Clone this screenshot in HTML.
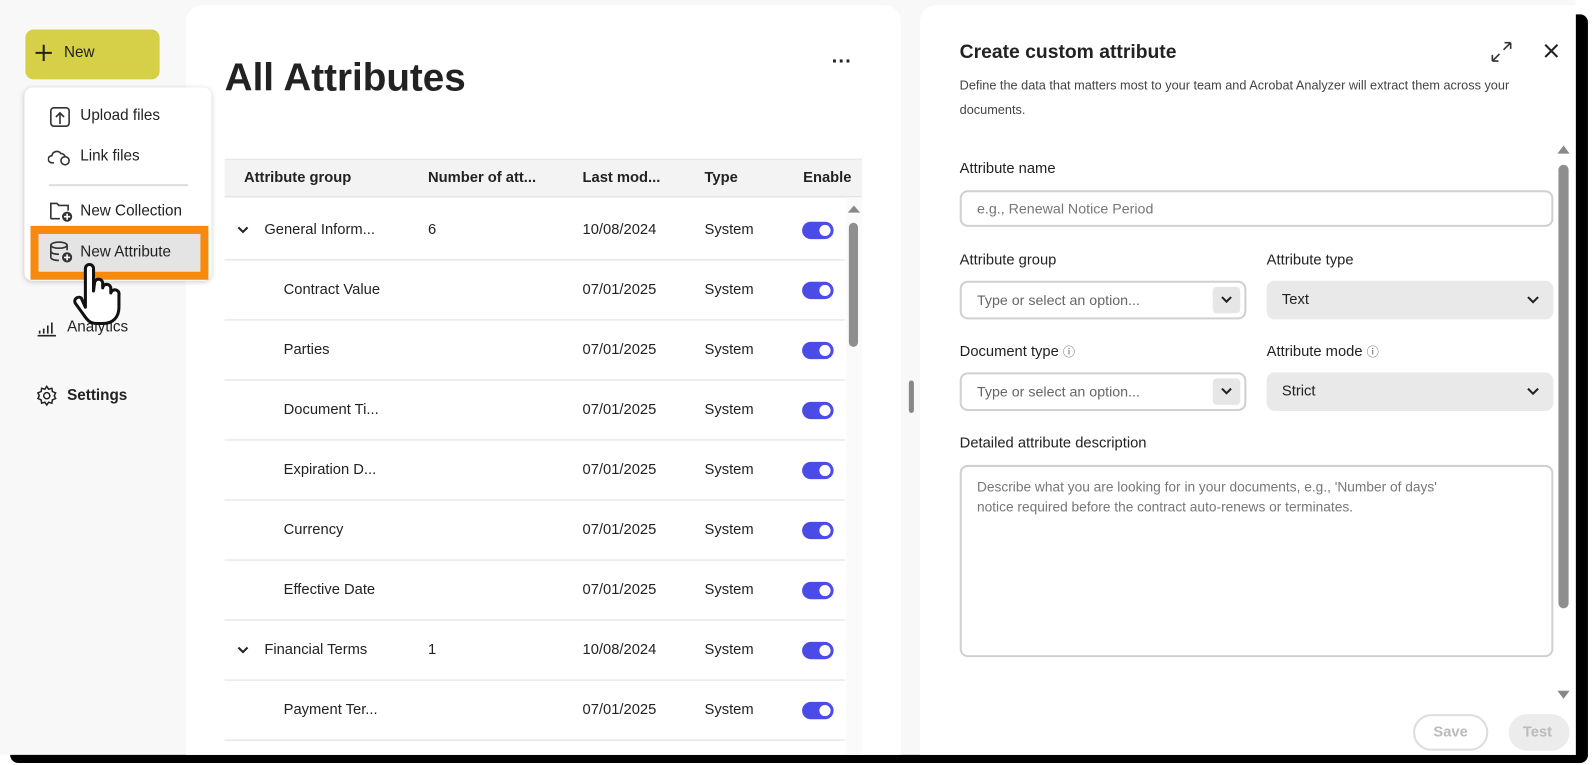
<!DOCTYPE html>
<html><head><meta charset="utf-8"><style>
*{box-sizing:border-box;margin:0;padding:0}
html,body{width:1594px;height:765px;overflow:hidden;background:#fff;font-family:"Liberation Sans",sans-serif;color:#222}
#w{position:absolute;left:0;top:0;width:1568px;height:752px;transform:scale(1.0166,1.0173);transform-origin:0 0}
.a{position:absolute}
.t{position:absolute;white-space:nowrap;font-size:14.5px;line-height:18px}
.b{font-weight:bold}
.tg{position:absolute;width:31px;height:17px;border-radius:9px;background:#4b4be8}
.tg:after{content:"";position:absolute;right:3px;top:3px;width:11px;height:11px;border-radius:50%;background:#fff}
.hr{position:absolute;left:221px;width:610px;height:1px;background:#ddd}
.inp{position:absolute;border:2px solid #d0d0d0;border-radius:8px;background:#fff}
.sel{position:absolute;border-radius:8px;background:#e9e9e9}
.ph{color:#777}
</style></head><body><div id="w">
<div class="a" style="left:0;top:0;width:1550px;height:742px;background:#f8f8f8"></div>
<div class="a" style="left:1550px;top:14px;width:12px;height:736px;background:#000;border-radius:0 8px 8px 0"></div>
<div class="a" style="left:10px;top:742px;width:1552px;height:8px;background:#000;border-radius:0 0 8px 8px"></div>

<!-- new button -->
<div class="a" style="left:25px;top:29px;width:132px;height:49px;background:#d6cf48;border-radius:8px"></div>
<svg class="a" style="left:34px;top:43px" width="18" height="18"><path d="M9 1v16M1 9h16" stroke="#222" stroke-width="2"/></svg>
<div class="t" style="left:63px;top:43px;font-size:15px">New</div>

<div class="t" style="left:66px;top:313px;font-size:15px">Analytics</div>
<svg class="a" style="left:35px;top:312px" width="22" height="20"><g stroke="#222" stroke-width="1.6"><path d="M2 18h18M4 16v-3M8 16v-5M12 16v-8M16 16v-11"/></g></svg>
<svg class="a" style="left:35px;top:378px" width="22" height="22" viewBox="0 0 24 24"><path d="M12 2l2 3 3.5-1 .5 3.5 3.5 1.5-1.5 3 1.5 3-3.5 1.5-.5 3.5-3.5-1-2 3-2-3-3.5 1-.5-3.5L2.5 15 4 12 2.5 9 6 7.5 6.5 4 10 5z" fill="none" stroke="#222" stroke-width="1.6"/><circle cx="12" cy="12" r="3.3" fill="none" stroke="#222" stroke-width="1.6"/></svg>
<div class="t b" style="left:66px;top:380px;font-size:15px">Settings</div>

<!-- main card -->
<div class="a" style="left:183px;top:5px;width:703px;height:737px;background:#fff;border-radius:16px 16px 0 0"></div>
<div class="t b" style="left:221px;top:55px;font-size:38px;line-height:44px">All Attributes</div>
<div class="t b" style="left:818px;top:52px;font-size:20px">···</div>
<div class="a" style="left:221px;top:156px;width:627px;height:38px;background:#f3f3f3;border-top:1px solid #e4e4e4;border-bottom:1px solid #ddd"></div>
<div class="t b" style="left:240px;top:166px">Attribute group</div>
<div class="t b" style="left:421px;top:166px">Number of att...</div>
<div class="t b" style="left:573px;top:166px">Last mod...</div>
<div class="t b" style="left:693px;top:166px">Type</div>
<div class="t b" style="left:790px;top:166px">Enable</div>
<div class="a" style="left:832px;top:195px;width:16px;height:547px;background:#fafafa"></div>
<div class="a" style="left:834px;top:202px;border-left:6px solid transparent;border-right:6px solid transparent;border-bottom:7px solid #888"></div>
<div class="a" style="left:835px;top:219px;width:9px;height:122px;background:#8e8e8e;border-radius:5px"></div>
<div class="a" style="left:894px;top:374px;width:5px;height:32px;background:#888;border-radius:3px"></div>

<div id="rows"></div>

<!-- menu (above card) -->
<div class="a" style="left:24px;top:86px;width:184px;height:190px;background:#fff;border-radius:8px;box-shadow:0 1px 5px rgba(0,0,0,.2)"></div>
<svg class="a" style="left:48px;top:104px" width="22" height="22"><rect x="2" y="2" width="18" height="18" rx="3" fill="none" stroke="#333" stroke-width="1.6"/><path d="M11 18V7M7 11l4-4 4 4" fill="none" stroke="#333" stroke-width="1.6"/></svg>
<div class="t" style="left:79px;top:105px;font-size:15px">Upload files</div>
<svg class="a" style="left:47px;top:144px" width="26" height="20"><path d="M6 16H4a3 3 0 010-7 5 5 0 019-2 4 4 0 014 3" fill="none" stroke="#333" stroke-width="1.6"/><circle cx="17" cy="14" r="4" fill="none" stroke="#333" stroke-width="1.6"/></svg>
<div class="t" style="left:79px;top:145px;font-size:15px">Link files</div>
<div class="a" style="left:48px;top:181px;width:137px;height:2px;background:#ddd"></div>
<svg class="a" style="left:48px;top:197px" width="26" height="22"><path d="M11 18H3a1 1 0 01-1-1V3h6l2 2h9v5" fill="none" stroke="#333" stroke-width="1.6"/><circle cx="18" cy="16" r="5" fill="#333"/><path d="M18 13v6M15 16h6" stroke="#fff" stroke-width="1.6"/></svg>
<div class="t" style="left:79px;top:199px;font-size:15px">New Collection</div>
<div class="a" style="left:30px;top:222px;width:175px;height:53px;border:8px solid #f7890d"></div>
<div class="a" style="left:38px;top:230px;width:159px;height:37px;background:#e4e4e4"></div>
<svg class="a" style="left:48px;top:236px" width="26" height="24"><ellipse cx="10" cy="5" rx="8" ry="3" fill="none" stroke="#333" stroke-width="1.6"/><path d="M2 5v12c0 2 4 3 8 3M18 5v5M2 11c0 2 4 3 8 3" fill="none" stroke="#333" stroke-width="1.6"/><circle cx="18" cy="17" r="5" fill="#333"/><path d="M18 14v6M15 17h6" stroke="#fff" stroke-width="1.6"/></svg>
<div class="t" style="left:79px;top:239px;font-size:15px">New Attribute</div>
<svg class="a" style="left:62px;top:256px" width="60" height="66"><path d="M22 46V8a4 4 0 018 0v22l1-8a4 4 0 018 1v4a4 4 0 018 1v4a4 4 0 018 2v12c0 10-6 16-16 16h-6c-6 0-9-3-13-9l-8-11a4 4 0 016-5z" fill="#fff" stroke="#111" stroke-width="3" stroke-linejoin="round"/></svg>

<!-- right panel -->
<div class="a" style="left:905px;top:5px;width:645px;height:737px;background:#fff;border-radius:16px 0 0 0"></div>
<div class="t b" style="left:944px;top:41px;font-size:19px;line-height:22px">Create custom attribute</div>
<div class="t" style="left:944px;top:75px;font-size:12.5px;color:#444">Define the data that matters most to your team and Acrobat Analyzer will extract them across your</div>
<div class="t" style="left:944px;top:99px;font-size:12.5px;color:#444">documents.</div>
<svg class="a" style="left:1465px;top:39px" width="24" height="24"><path d="M3 21l7-7M3 21v-6M3 21h6M21 3l-7 7M21 3v6M21 3h-6" fill="none" stroke="#333" stroke-width="1.6"/></svg>
<svg class="a" style="left:1518px;top:42px" width="16" height="16"><path d="M2 2l12 12M14 2L2 14" stroke="#222" stroke-width="2"/></svg>
<div class="a" style="left:1532px;top:143px;border-left:6px solid transparent;border-right:6px solid transparent;border-bottom:8px solid #888"></div>
<div class="a" style="left:1533px;top:162px;width:10px;height:436px;background:#8e8e8e;border-radius:5px"></div>
<div class="a" style="left:1532px;top:679px;border-left:6px solid transparent;border-right:6px solid transparent;border-top:8px solid #888"></div>

<div class="t" style="left:944px;top:157px;font-size:14.5px">Attribute name</div>
<div class="inp" style="left:944px;top:187px;width:584px;height:36px"></div>
<div class="t ph" style="left:961px;top:196px;font-size:14px">e.g., Renewal Notice Period</div>

<div class="t" style="left:944px;top:247px">Attribute group</div>
<div class="t" style="left:1246px;top:247px">Attribute type</div>
<div class="inp" style="left:944px;top:276px;width:282px;height:38px"></div>
<div class="t ph" style="left:961px;top:286px;font-size:14px;color:#666">Type or select an option...</div>
<div class="a" style="left:1193px;top:282px;width:27px;height:26px;background:#e6e6e6;border-radius:4px"></div>
<svg class="a" style="left:1200px;top:290px" width="13" height="10"><path d="M2 2l4.5 4.5L11 2" fill="none" stroke="#222" stroke-width="2"/></svg>
<div class="sel" style="left:1246px;top:276px;width:282px;height:38px"></div>
<div class="t" style="left:1261px;top:286px">Text</div>
<svg class="a" style="left:1501px;top:290px" width="14" height="10"><path d="M2 2l5 5 5-5" fill="none" stroke="#222" stroke-width="2"/></svg>

<div class="t" style="left:944px;top:337px">Document type <span style="font-size:12px;color:#555">ⓘ</span></div>
<div class="t" style="left:1246px;top:337px">Attribute mode <span style="font-size:12px;color:#555">ⓘ</span></div>
<div class="inp" style="left:944px;top:366px;width:282px;height:38px"></div>
<div class="t ph" style="left:961px;top:376px;font-size:14px;color:#666">Type or select an option...</div>
<div class="a" style="left:1193px;top:372px;width:27px;height:26px;background:#e6e6e6;border-radius:4px"></div>
<svg class="a" style="left:1200px;top:380px" width="13" height="10"><path d="M2 2l4.5 4.5L11 2" fill="none" stroke="#222" stroke-width="2"/></svg>
<div class="sel" style="left:1246px;top:366px;width:282px;height:38px"></div>
<div class="t" style="left:1261px;top:376px">Strict</div>
<svg class="a" style="left:1501px;top:380px" width="14" height="10"><path d="M2 2l5 5 5-5" fill="none" stroke="#222" stroke-width="2"/></svg>

<div class="t" style="left:944px;top:427px">Detailed attribute description</div>
<div class="inp" style="left:944px;top:457px;width:584px;height:189px"></div>
<div class="t ph" style="left:961px;top:470px;font-size:13.5px">Describe what you are looking for in your documents, e.g., 'Number of days'</div>
<div class="t ph" style="left:961px;top:490px;font-size:13.5px">notice required before the contract auto-renews or terminates.</div>

<div class="a" style="left:1390px;top:702px;width:74px;height:36px;border:2px solid #ddd;border-radius:18px"></div>
<div class="t b" style="left:1410px;top:711px;color:#bbb">Save</div>
<div class="a" style="left:1484px;top:702px;width:60px;height:36px;background:#ececec;border-radius:18px"></div>
<div class="t b" style="left:1498px;top:711px;color:#bbb">Test</div>

<div class="a" style="left:1550px;top:0;width:18px;height:14px;background:#fff"></div>
</div>
<script>
var r=[["General Inform...","6","10/08/2024",1],["Contract Value","","07/01/2025"],["Parties","","07/01/2025"],["Document Ti...","","07/01/2025"],["Expiration D...","","07/01/2025"],["Currency","","07/01/2025"],["Effective Date","","07/01/2025"],["Financial Terms","1","10/08/2024",1],["Payment Ter...","","07/01/2025"]];
var h="";
r.forEach(function(x,i){var c=226+59*i;var y=c-9;
if(x[3])h+='<svg class="a" style="left:233px;top:'+(c-4)+'px" width="12" height="9"><path d="M1.5 1.5l4.5 4.5 4.5-4.5" fill="none" stroke="#222" stroke-width="2"/></svg><div class="t" style="left:260px;top:'+y+'px">'+x[0]+'</div>';
else h+='<div class="t" style="left:279px;top:'+y+'px">'+x[0]+'</div>';
h+='<div class="t" style="left:421px;top:'+y+'px">'+x[1]+'</div><div class="t" style="left:573px;top:'+y+'px">'+x[2]+'</div><div class="t" style="left:693px;top:'+y+'px">System</div><div class="tg" style="left:789px;top:'+(c-8)+'px"></div>';
h+='<div class="hr" style="top:'+(c+29)+'px"></div>';});
document.getElementById("rows").outerHTML=h;
</script>
</body></html>
